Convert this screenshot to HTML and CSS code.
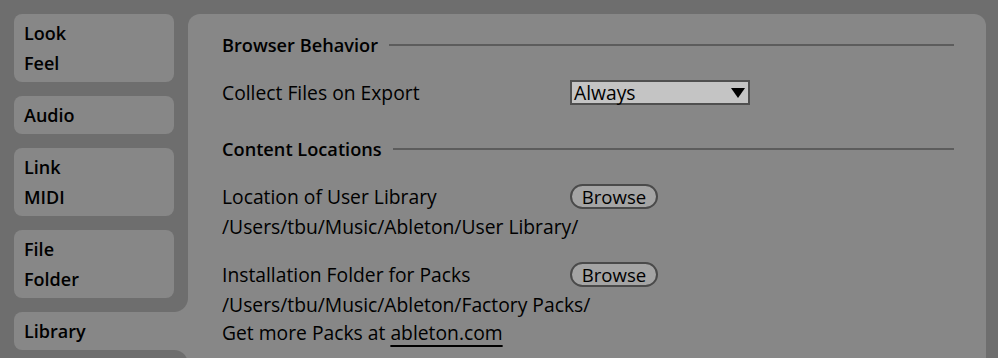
FILE: index.html
```html
<!DOCTYPE html>
<html lang="en">
<head>
<meta charset="utf-8">
<title>Preferences</title>
<link rel="stylesheet" href="styles.css">
</head>
<body>
<div class="window">
  <nav class="tabs">
    <div class="tab"><div>Look</div><div>Feel</div></div>
    <div class="tab"><div>Audio</div></div>
    <div class="tab"><div>Link</div><div>MIDI</div></div>
    <div class="tab"><div>File</div><div>Folder</div></div>
    <div class="tab selected"><div>Library</div></div>
  </nav>
  <main class="panel">
    <div class="section-head first"><span>Browser Behavior</span></div>
    <div class="row">
      <span class="label">Collect Files on Export</span>
      <div class="dropdown"><span>Always</span><svg class="arrow" width="14" height="10" viewBox="0 0 14 10"><polygon points="0,0 14,0 7,10" fill="#000"/></svg></div>
    </div>
    <div class="section-head"><span>Content Locations</span></div>
    <div class="row">
      <span class="label">Location of User Library</span>
      <button class="browse">Browse</button>
    </div>
    <div class="line">/Users/tbu/Music/Ableton/User Library/</div>
    <div class="row group">
      <span class="label">Installation Folder for Packs</span>
      <button class="browse">Browse</button>
    </div>
    <div class="line">/Users/tbu/Music/Ableton/Factory Packs/</div>
    <div class="line">Get more Packs at <a class="link" href="#">ableton.com</a></div>
  </main>
</div>
</body>
</html>
```
FILE: styles.css
```css
html, body {
  margin: 0;
  height: 100%;
  overflow: hidden;
  background: #6e6e6e;
}

.window {
  display: flex;
  gap: 14px;
  padding: 14px 12px 0 14px;
  font-family: "Open Sans", "Liberation Sans", sans-serif;
  color: #000;
}

.tabs {
  width: 160px;
  flex-shrink: 0;
  display: flex;
  flex-direction: column;
  gap: 14px;
}

.tab {
  position: relative;
  background: #878787;
  border-radius: 8px;
  padding: 4px 10px;
  font-size: 18px;
  font-weight: 600;
  line-height: 30px;
}

.tab.selected {
  margin-right: -14px;
  border-radius: 8px 0 0 8px;
}

.tab.selected::before,
.tab.selected::after {
  content: "";
  position: absolute;
  right: 0;
  width: 14px;
  height: 14px;
}

.tab.selected::before {
  top: -14px;
  background: radial-gradient(circle at 0 0, transparent 13.5px, #878787 14.5px);
}

.tab.selected::after {
  bottom: -14px;
  background: radial-gradient(circle at 0 100%, transparent 13.5px, #878787 14.5px);
}

.panel {
  flex: 1;
  height: 420px;
  background: #878787;
  border-radius: 12px 12px 0 0;
  padding: 17px 32px 0 34px;
  font-size: 19.3px;
}

.section-head {
  display: flex;
  align-items: center;
  gap: 11px;
  height: 28px;
  font-size: 18.2px;
  font-weight: 600;
  margin: 26px 0 18px;
}

.section-head.first {
  margin-top: 0;
}

.section-head::after {
  content: "";
  flex: 1;
  height: 2px;
  background: #5c5c5c;
}

.row {
  display: flex;
  align-items: center;
  height: 31px;
  padding-bottom: 1px;
}

.row.group {
  margin-top: 18px;
}

.label {
  width: 348px;
  flex-shrink: 0;
}

.line {
  height: 28px;
  line-height: 27px;
}

.dropdown {
  box-sizing: border-box;
  width: 180px;
  height: 25px;
  display: flex;
  align-items: center;
  justify-content: space-between;
  padding: 0 2px 0 2px;
  background: #c4c4c4;
  border: 2px solid #4f4f4f;
  line-height: 21px;
}

.arrow {
  margin-right: 1px;
}

.browse {
  box-sizing: border-box;
  width: 88px;
  height: 25px;
  padding: 0;
  border: 2px solid #4a4a4a;
  border-radius: 13px;
  background: #a4a4a4;
  font: inherit;
  font-size: 18.6px;
  line-height: 21px;
  color: #000;
}

.link {
  color: #000;
  text-decoration: underline;
  text-decoration-thickness: 2px;
  text-underline-offset: 5px;
}
```
